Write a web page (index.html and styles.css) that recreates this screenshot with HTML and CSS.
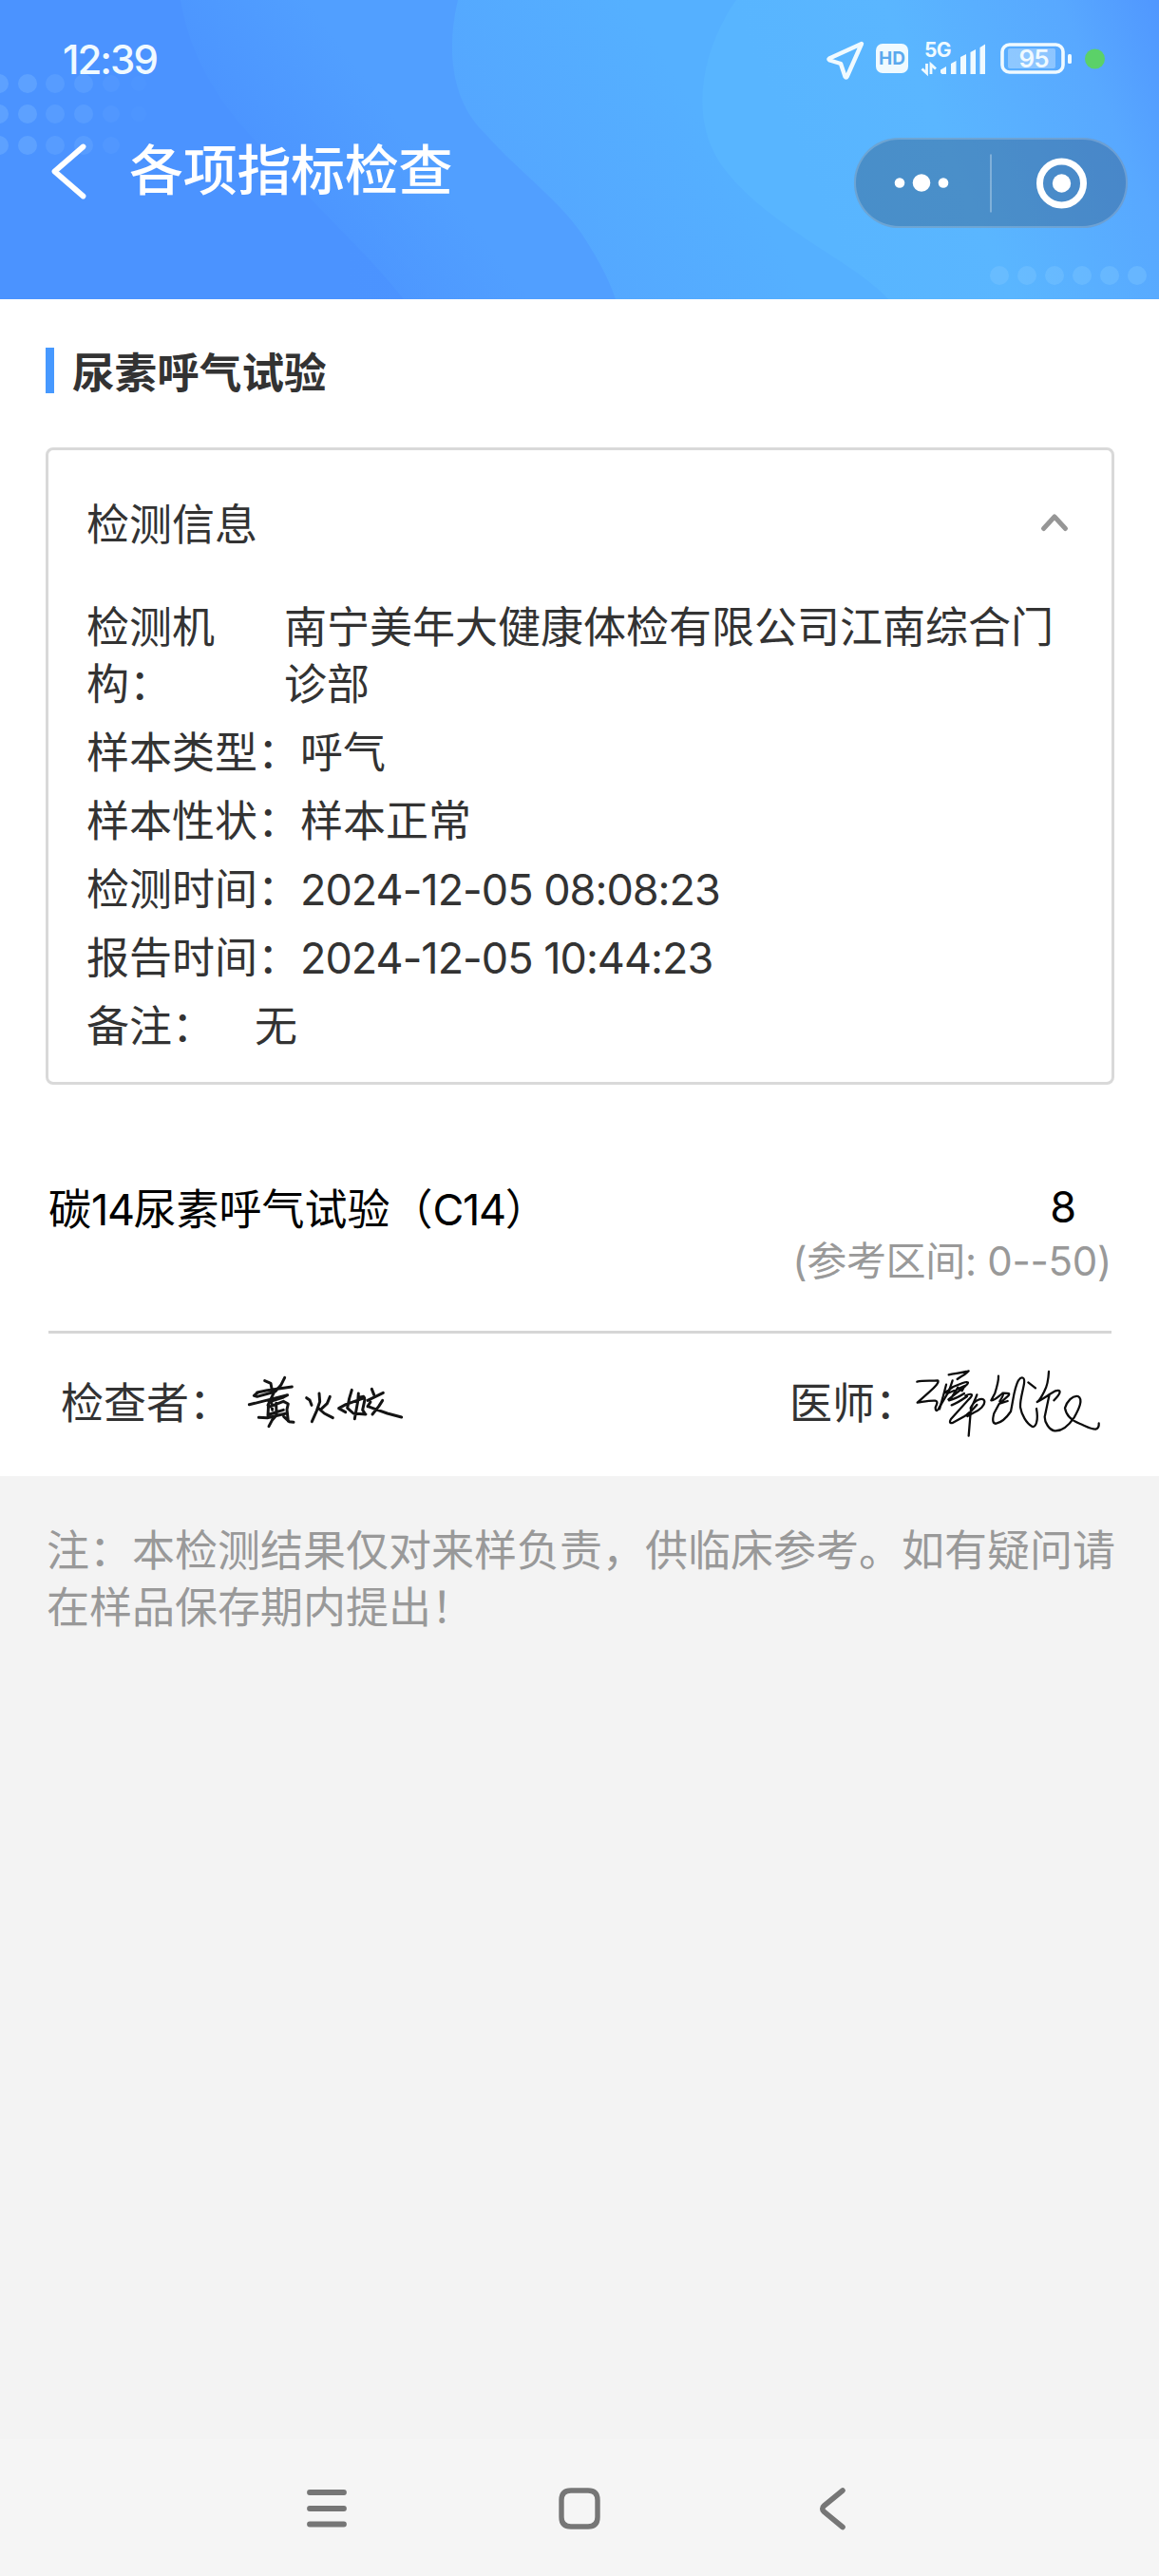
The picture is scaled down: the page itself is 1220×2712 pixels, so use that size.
FILE: index.html
```html
<!DOCTYPE html>
<html lang="zh-CN">
<head>
<meta charset="utf-8">
<title>各项指标检查</title>
<link rel="stylesheet" href="styles.css">
</head>
<body>
<div class="page">
  <header class="header">
    <svg class="header-bg" viewBox="0 0 1220 315" aria-hidden="true">
      <defs>
        <linearGradient id="base" x1="0" y1="0" x2="1" y2="0">
          <stop offset="0" stop-color="#4b93ff"/><stop offset=".3" stop-color="#4b93ff"/><stop offset="1" stop-color="#529cff"/>
        </linearGradient>
        <linearGradient id="haze" gradientUnits="userSpaceOnUse" x1="240" y1="160" x2="370" y2="63">
          <stop offset="0" stop-color="#519fff" stop-opacity="0"/><stop offset="1" stop-color="#519fff"/>
        </linearGradient>
        <linearGradient id="wave1" gradientUnits="userSpaceOnUse" x1="470" y1="200" x2="700" y2="60">
          <stop offset="0" stop-color="#54a4ff"/><stop offset="1" stop-color="#55b0ff"/>
        </linearGradient>
        <linearGradient id="wave2" gradientUnits="userSpaceOnUse" x1="850" y1="190" x2="1240" y2="20">
          <stop offset="0" stop-color="#58b5ff"/><stop offset=".35" stop-color="#5ab6ff"/><stop offset=".75" stop-color="#58a8ff"/><stop offset="1" stop-color="#4f95ff"/>
        </linearGradient>
      </defs>
      <rect width="1220" height="315" fill="url(#base)"/>
      <path d="M190 0H700V315H425C385 265 330 215 280 160C230 110 200 60 190 0Z" fill="url(#haze)"/>
      <path d="M482 0C470 50 474 105 510 140C550 185 595 215 618 255C635 282 643 300 648 315H960V0Z" fill="url(#wave1)"/>
      <path d="M775 0C740 50 725 120 757 170C800 235 900 275 935 315H1220V0Z" fill="url(#wave2)"/>
      <g fill="#70b0ff">
        <g opacity=".5"><circle cx="-1" cy="88" r="10"/><circle cx="-1" cy="120" r="10"/><circle cx="-1" cy="153" r="10"/><circle cx="29" cy="88" r="10"/><circle cx="29" cy="120" r="10"/><circle cx="29" cy="153" r="10"/></g>
        <g opacity=".34"><circle cx="58" cy="88" r="10"/><circle cx="58" cy="120" r="10"/><circle cx="58" cy="153" r="10"/><circle cx="88" cy="88" r="10"/><circle cx="88" cy="120" r="10"/><circle cx="88" cy="153" r="10"/></g>
        <g opacity=".16"><circle cx="117" cy="88" r="9"/><circle cx="117" cy="120" r="9"/><circle cx="117" cy="153" r="9"/><circle cx="146" cy="88" r="8" opacity=".5"/><circle cx="146" cy="120" r="8" opacity=".5"/></g>
      </g>
      <g fill="#7cc6ff" opacity=".42"><circle cx="1052" cy="290" r="10"/><circle cx="1081" cy="290" r="10"/><circle cx="1110" cy="290" r="10"/><circle cx="1139" cy="290" r="10"/><circle cx="1168" cy="290" r="10"/><circle cx="1197" cy="290" r="10"/></g>
    </svg>

    <div class="status-bar">
      <span class="clock">12:39</span>
      <svg class="status-icons" width="300" height="50" viewBox="868 38 300 50" aria-hidden="true">
        <path d="M907 46L873 61.5Q871.5 62.5 873.5 63.5L885 67L889.5 80.5Q890.7 82.5 891.7 80.5Z" fill="none" stroke="#f0faff" stroke-width="4.400" stroke-linejoin="round"/>
        <rect x="922" y="46" width="34" height="31" rx="7" fill="#f0faff"/>
        <text x="939" y="68.300" class="hd-text" text-anchor="middle">HD</text>
        <text x="987" y="60" class="net-text" text-anchor="middle">5G</text>
        <path d="M975.5 67V77L970.5 72.5M980 78V68L985 72.5" fill="none" stroke="#f0faff" stroke-width="2.8"/>
        <path d="M990 76.500V73.500L996 70V78H991.500ZM1001 78V67L1006.500 64V78ZM1011 78V60L1017 57V78ZM1021.500 78V55L1027 52V78ZM1031.500 78V50L1037 46.500V78Z" fill="#f0faff"/>
        <rect x="1055" y="47" width="64" height="29" rx="7.500" fill="none" stroke="#f0faff" stroke-width="3.600"/>
        <rect x="1061" y="51" width="50" height="21" rx="2" fill="#fff" opacity=".32"/>
        <rect x="1124" y="57" width="4" height="10" rx="1.500" fill="#f0faff"/>
        <text x="1088" y="71" class="battery-text" text-anchor="middle">95</text>
        <circle cx="1152.500" cy="62" r="10.500" fill="#5bd168"/>
      </svg>
    </div>

    <div class="nav-bar">
      <svg class="back" width="42" height="64" viewBox="51 148 42 64" aria-label="返回"><path d="M87.500 154.500L57.500 180.500L87.500 206.500" fill="none" stroke="#fff" stroke-width="5.800" stroke-linecap="round" stroke-linejoin="round"/></svg>
      <h1 class="title">各项指标检查</h1>
      <div class="capsule">
        <svg width="288" height="95" viewBox="899 144.500 288 95" aria-hidden="true">
          <g fill="#fff"><circle cx="947" cy="192" r="5.300"/><circle cx="970" cy="192" r="9.300"/><circle cx="993" cy="192" r="5.300"/><circle cx="1117.500" cy="192.500" r="9.700"/></g>
          <path d="M1043 162V223" stroke="#fff" stroke-opacity=".3" stroke-width="2"/>
          <circle cx="1117.500" cy="192.500" r="23" fill="none" stroke="#fff" stroke-width="7"/>
        </svg>
      </div>
    </div>
  </header>

  <main class="report">
    <h2 class="section-title">尿素呼气试验</h2>
    <section class="card">
      <div class="card-head">
        <span>检测信息</span>
        <svg width="36" height="24" viewBox="0 0 36 24" aria-hidden="true"><path d="M6.500 17.500L18 5L29.500 17.500" fill="none" stroke="#969696" stroke-width="5" stroke-linecap="round" stroke-linejoin="round"/></svg>
      </div>
      <dl class="info">
        <div class="row"><dt class="label label-wide">检测机<br>构：</dt><dd>南宁美年大健康体检有限公司江南综合门诊部</dd></div>
        <div class="row"><dt class="label">样本类型：</dt><dd>呼气</dd></div>
        <div class="row"><dt class="label">样本性状：</dt><dd>样本正常</dd></div>
        <div class="row"><dt class="label">检测时间：</dt><dd class="date">2024-12-05 08:08:23</dd></div>
        <div class="row"><dt class="label">报告时间：</dt><dd class="date">2024-12-05 10:44:23</dd></div>
        <div class="row"><dt class="label">备注：</dt><dd>无</dd></div>
      </dl>
    </section>

    <section class="result">
      <div class="result-name">碳<span class="num">14</span>尿素呼气试验（<span class="num">C14</span>）</div>
      <div class="result-side">
        <div class="result-value">8</div>
        <div class="result-range">(参考区间: 0--50)</div>
      </div>
    </section>

    <section class="signs">
      <div class="sign">检查者：
        <svg class="signature-a" width="190" height="100" viewBox="30 0 570 300" aria-label="签名">
          <g fill="none" stroke="#141414" stroke-width="9" stroke-linecap="round" stroke-linejoin="round">
            <path d="M116 74L135 82L139 104M179 64L167 88L150 107M92 111L124 104L202 93M94 111L82 121L92 124L139 111L150 107M67 149L85 145L188 119L175 126L135 139M146 109L126 151M128 147L126 184M127 158L175 139L190 147L186 165L190 201M138 145L140 166M152 145L153 179M131 180L175 166M97 190L124 191L184 177M155 181L139 199L129 218M176 187L193 203L207 205"/>
            <path d="M248 128L258 135L264 151M322 124L313 146L297 161M288 114L290 140L280 169L265 203M285 160L304 177L331 191"/>
            <path d="M391 103L383 130L377 160L396 177L435 180M412 114L410 139L400 194M350 161L372 149L431 128M351 162L371 173M414 127L428 124L432 134L425 166L434 180"/>
            <path d="M454 100L461 118M441 136L490 112M450 141L441 155M488 136L476 155L456 180M442 155L466 164L503 177L548 189"/>
          </g>
        </svg>
      </div>
      <div class="sign">医师：
        <svg class="signature-b" width="200" height="120" viewBox="60 0 600 360" aria-label="签名">
          <g fill="none" stroke="#0c0c0c" stroke-width="6.800" stroke-linecap="round" stroke-linejoin="round">
            <path d="M76 107C95 103 120 105 141 103C149 107 130 126 115 139L77 173C93 171 114 166 133 167C144 169 138 179 134 188C134 203 141 200 145 190L177 136L188 103"/>
            <path d="M176 85C195 81 220 78 239 73C230 84 213 91 203 99M163 142L190 123L220 111C238 105 242 109 229 120L175 163M168 116L157 158L147 193M181 126L170 144C186 139 209 128 226 120M205 125L186 155L177 166C193 162 214 151 225 144M226 121L218 136M185 181C201 175 221 162 234 153M229 151C248 142 257 147 239 163L183 225C178 233 179 240 188 237L226 216C245 204 257 190 265 180M265 148C260 164 251 178 246 192L239 278M245 190C258 164 282 156 288 166C294 181 272 197 255 205L235 216"/>
            <path d="M333 89C334 105 328 124 322 143L310 166C322 166 335 151 347 143C352 148 342 159 337 169M346 143C363 143 374 142 361 154L335 177L319 207C313 229 315 241 326 239C340 236 359 220 372 201M337 176L362 168M372 201C381 158 382 129 396 103C407 88 417 93 414 113C410 138 401 163 402 187C406 211 421 239 440 249C451 251 460 230 453 192M427 109L450 127"/>
            <path d="M492 75C491 96 487 121 478 137C471 151 460 168 455 171C467 166 492 148 513 136C535 130 529 146 508 166M494 147L487 180L479 218C479 237 494 259 510 262C533 264 555 245 572 220C587 194 602 162 584 153C567 149 549 170 543 190C547 216 570 232 591 240C610 248 627 258 640 257C649 254 651 247 650 238"/>
          </g>
        </svg>
      </div>
    </section>
  </main>

  <p class="note">注：本检测结果仅对来样负责，供临床参考。如有疑问请<br>在样品保存期内提出！</p>

  <footer class="system-nav">
    <svg width="46" height="46" viewBox="0 0 46 46" aria-hidden="true"><path d="M5 6H41M5 23H41M5 39.500H41" stroke="#767676" stroke-width="5.800" stroke-linecap="round"/></svg>
    <svg width="46" height="46" viewBox="0 0 46 46" aria-hidden="true"><path d="M4 14Q4 4 14 4H32Q42 4 42 14V32Q42 42 32 42H14Q4 42 4 32Z" fill="none" stroke="#767676" stroke-width="5.400"/></svg>
    <svg width="46" height="46" viewBox="0 0 46 46" aria-hidden="true"><path d="M34 4L14.500 20Q11 23 14.500 26.500L34 42.500" fill="none" stroke="#767676" stroke-width="5.600" stroke-linecap="round"/></svg>
  </footer>
</div>
</body>
</html>
```
FILE: styles.css
```css
* { box-sizing: border-box; }
body {
  margin: 0;
  background: #f3f3f3;
  color: #333;
  font-family: Inter, "Noto Sans CJK SC", sans-serif;
  font-size: 45px;
  line-height: 60px;
}
h1, h2, p, dl, dd { margin: 0; }
svg { display: block; flex: none; }

.page { display: flex; flex-direction: column; width: 1220px; height: 2712px; }

.header { position: relative; height: 315px; color: #fff; }
.header-bg { position: absolute; inset: 0; width: 1220px; height: 315px; }
.status-bar {
  position: relative;
  display: flex;
  align-items: center;
  justify-content: space-between;
  height: 126px;
  padding: 0 52px 0 66px;
}
.clock { font-size: 42px; font-weight: 500; letter-spacing: -2px; color: #f0faff; }
.hd-text { font-size: 19px; font-weight: 700; fill: #5ba9ee; }
.net-text { font-size: 21px; font-weight: 700; fill: #f0faff; letter-spacing: -.5px; }
.battery-text { font-size: 26px; font-weight: 600; fill: #f0faff; letter-spacing: -1px; }

.nav-bar { position: relative; display: flex; align-items: center; padding: 0 33px 0 51px; height: 108px; }
.title { margin-left: 43px; font-size: 57px; font-weight: 500; line-height: 76px; letter-spacing: -.3px; }
.capsule {
  margin: 24px 0 0 auto;
  width: 288px;
  height: 95px;
  border-radius: 48px;
  background: rgba(50, 85, 120, .4);
  box-shadow: inset 0 0 0 2px rgba(255, 255, 255, .2);
}

.report { height: 1239px; background: #fff; padding: 51px 47px 0 48px; }
.section-title {
  display: flex;
  align-items: center;
  height: 54px;
  font-size: 44.6px;
  font-weight: 700;
}
.section-title::before { content: ""; width: 9px; height: 48px; margin: 0 19px 6px 0; background: #4799ff; }
.card { height: 671px; margin-top: 51px; border: 3px solid #d9d9d9; border-radius: 8px; padding: 49px 42px 0 40px; }
.card-head { display: flex; justify-content: space-between; align-items: center; height: 60px; }
.card-head svg { margin-bottom: 5px; }
.info { display: flex; flex-direction: column; gap: 12px; margin-top: 48px; }
.row { display: flex; }
.row dd { margin-right: -4px; }
.label { flex: none; min-width: 177px; white-space: nowrap; }
.label-wide { width: 208px; }
.date { letter-spacing: -1px; }

.result { display: flex; justify-content: space-between; width: 1119px; height: 262px; margin-left: 3px; padding-top: 102px; border-bottom: 3px solid #d6d6d6; color: #000; }
.num { letter-spacing: -1.4px; }
.result-side { text-align: right; }
.result-value { height: 57px; padding-right: 37px; line-height: 54px; }
.result-range { color: #999; font-size: 42px; line-height: 54px; letter-spacing: -.3px; }

.signs { display: flex; justify-content: space-between; height: 147px; padding: 0 13px 0 16px; }
.sign { display: flex; align-items: center; }
.signature-a { margin: 3px 0 0 6px; }
.signature-b { margin: 3px 0 0 -6px; }

.note { height: 1014px; padding: 49px 0 0 49px; color: #999; white-space: nowrap; }
.system-nav { display: flex; justify-content: space-between; height: 144px; padding: 50px 321px 0 321px; background: #f5f5f5; }
```
